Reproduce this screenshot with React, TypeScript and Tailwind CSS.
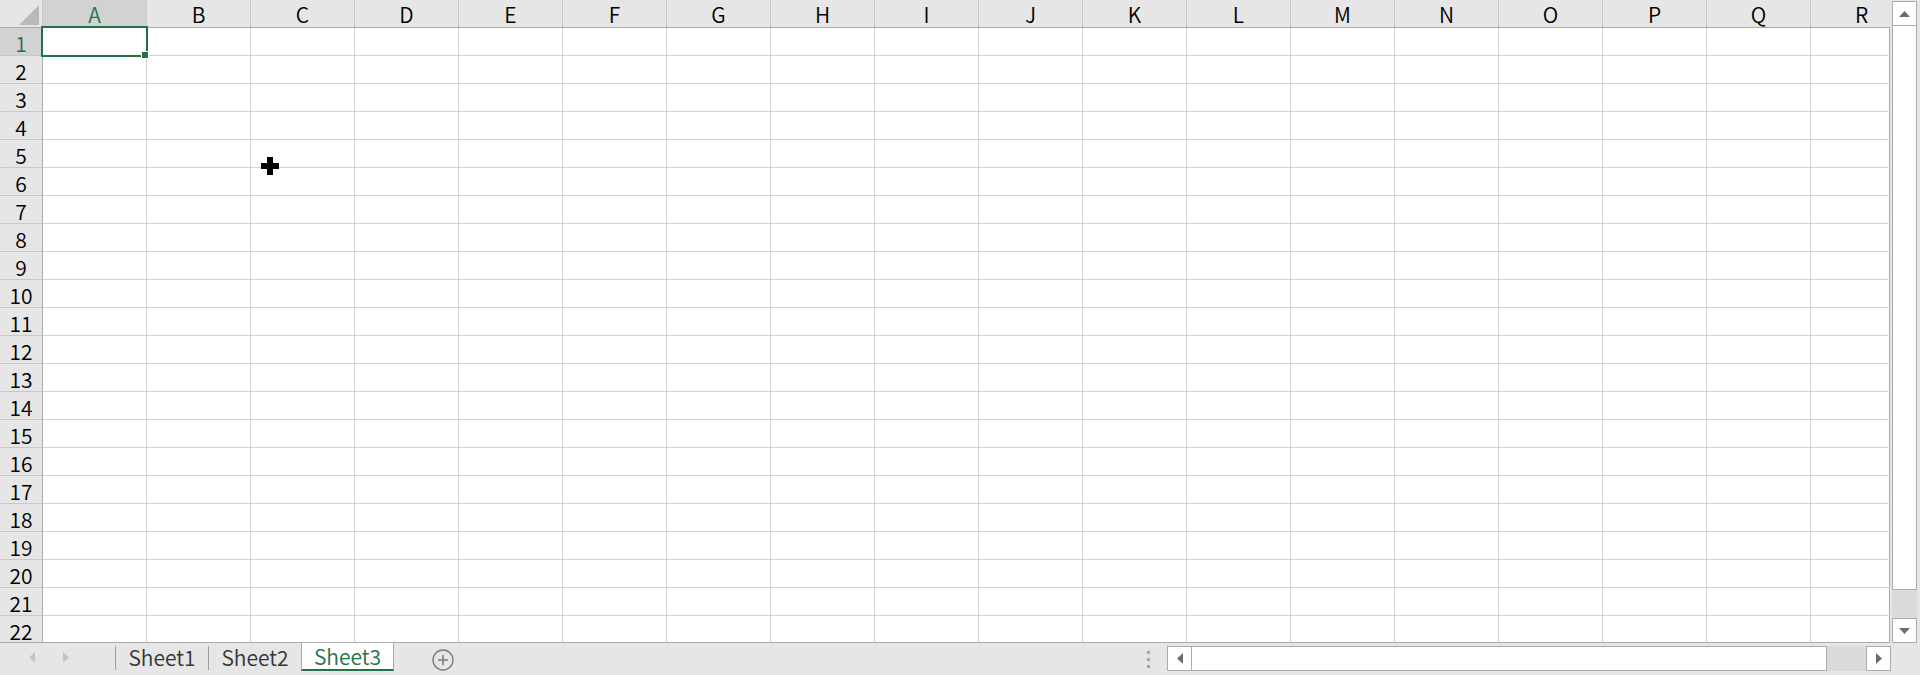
import React from "react";

const COLS = "ABCDEFGHIJKLMNOPQ".split("");
const ROWS = Array.from({ length: 22 }, (_, i) => i + 1);

function Tri({ dir, color, w, h }: { dir: "up" | "down" | "left" | "right"; color: string; w: number; h: number }) {
  const pts =
    dir === "up"
      ? `0,${h} ${w / 2},0 ${w},${h}`
      : dir === "down"
      ? `0,0 ${w},0 ${w / 2},${h}`
      : dir === "left"
      ? `${w},0 0,${h / 2} ${w},${h}`
      : `0,0 ${w},${h / 2} 0,${h}`;
  return (
    <svg width={w} height={h} viewBox={`0 0 ${w} ${h}`} className="block">
      <polygon points={pts} fill={color} />
    </svg>
  );
}

function HeaderRow() {
  return (
    <div className="flex h-[28px] shrink-0 border-b border-[#ababab] bg-[#e6e6e6]">
      {/* corner */}
      <div className="w-[43px] border-r border-[#c8c8c8] flex items-end justify-end pr-[3px] pb-[2px]">
        <svg width="20" height="20" viewBox="0 0 20 20" className="block">
          <polygon points="0,20 20,20 20,0" fill="#b9b9b9" />
        </svg>
      </div>
      {COLS.map((c) => (
        <div
          key={c}
          className={`w-[104px] border-r border-[#c8c8c8] flex items-center justify-center ${
            c === "A" ? "bg-[#d2d2d2] text-[#217346]" : "text-black"
          }`}
        >
          <span className="leading-[22px]">{c}</span>
        </div>
      ))}
      <div className="w-[79px] flex items-center justify-center text-black pl-[22px]">
        <span className="leading-[22px]">R</span>
      </div>
    </div>
  );
}

function Row({ n }: { n: number }) {
  const sel = n === 1;
  return (
    <div className="flex h-[28px] shrink-0">
      <div
        className={`w-[43px] border-r border-b border-r-[#ababab] border-b-[#c8c8c8] flex items-center justify-center pt-[2px] ${
          sel ? "bg-[#d2d2d2] text-[#217346]" : "bg-[#e6e6e6] text-black"
        }`}
      >
        <span className="leading-[22px]">{n}</span>
      </div>
      {COLS.map((c) => (
        <div key={c} className="w-[104px] border-r border-b border-[#d4d4d4] bg-white" />
      ))}
      <div className="w-[79px] border-b border-b-[#d4d4d4] border-r border-r-[#ababab] bg-white" />
    </div>
  );
}

function VScroll() {
  return (
    <div className="w-[25px] flex flex-col pt-[1px] overflow-hidden">
      <div className="h-[25px] shrink-0 border border-[#ababab] bg-white flex items-center justify-center">
        <Tri dir="up" color="#6d6d6d" w={11} h={6} />
      </div>
      <div className="h-[564px] shrink-0 border-x border-b border-[#ababab] bg-white" />
      <div className="h-[28px] shrink-0 bg-[#dadada]" />
      <div className="h-[25px] shrink-0 border border-[#ababab] bg-white flex items-center justify-center">
        <Tri dir="down" color="#6d6d6d" w={11} h={6} />
      </div>
    </div>
  );
}

function HScroll() {
  return (
    <div className="flex h-[25px] mt-[3px]">
      <div className="w-[25px] border border-[#ababab] bg-white flex items-center justify-center">
        <Tri dir="left" color="#6d6d6d" w={6} h={11} />
      </div>
      <div className="w-[635px] border-y border-r border-[#ababab] bg-white" />
      <div className="w-[39px] bg-[#dadada]" />
      <div className="w-[25px] border border-[#ababab] bg-white flex items-center justify-center">
        <Tri dir="right" color="#6d6d6d" w={6} h={11} />
      </div>
    </div>
  );
}

function TabBar() {
  return (
    <div className="h-[32px] flex items-start">
      <div className="w-[115px] h-[28px] flex items-center pl-[29px] gap-[28px]">
        <Tri dir="left" color="#c4c4c4" w={6} h={11} />
        <Tri dir="right" color="#c4c4c4" w={6} h={11} />
      </div>
      <div className="w-px h-[24px] mt-[3px] bg-[#9e9e9e]" />
      <div className="w-[92px] h-[28px] flex items-center justify-center text-[#333]">
        <span className="leading-[22px]">Sheet1</span>
      </div>
      <div className="w-px h-[24px] mt-[3px] bg-[#9e9e9e]" />
      <div className="w-[92px] h-[28px] flex items-center justify-center text-[#333]">
        <span className="leading-[22px]">Sheet2</span>
      </div>
      <div className="w-[93px] h-[28px] border-x border-[#ababab] border-b-2 border-b-[#217346] bg-white flex items-center justify-center text-[#217346]">
        <span className="leading-[22px]">Sheet3</span>
      </div>
      <div className="ml-[38px] mt-[6px]">
        <svg width="22" height="22" viewBox="0 0 22 22" className="block">
          <circle cx="11" cy="11" r="10" fill="none" stroke="#7b7b7b" strokeWidth="1.4" />
          <path d="M11 6v10M6 11h10" stroke="#7b7b7b" strokeWidth="1.6" />
        </svg>
      </div>
      <div className="flex-1" />
      <div className="flex flex-col gap-[4px] mt-[8px] mr-[17px]">
        <div className="w-[3px] h-[3px] bg-[#a6a6a6]" />
        <div className="w-[3px] h-[3px] bg-[#a6a6a6]" />
        <div className="w-[3px] h-[3px] bg-[#a6a6a6]" />
      </div>
      <HScroll />
      <div className="w-[29px]" />
    </div>
  );
}

export default function App() {
  return (
    <div
      className="w-[1920px] h-[675px] bg-[#e6e6e6] overflow-hidden flex flex-col text-[21px] font-[350]"
      style={{ fontFamily: '"Noto Sans CJK SC", "Noto Sans", sans-serif' }}
    >
      <div className="flex h-[643px] shrink-0">
        <div className="w-[1890px] h-[643px] relative flex flex-col">
          <HeaderRow />
          <div className="h-[614px] overflow-hidden flex flex-col">
            {ROWS.map((n) => (
              <Row key={n} n={n} />
            ))}
          </div>
          <div className="h-px bg-[#ababab]" />
          {/* active cell A1 */}
          <div className="absolute left-[41px] top-[26px] w-[107px] h-[31px] border-2 border-[#217346]" />
          <div className="absolute left-[141px] top-[51px] w-[8px] h-[8px] bg-[#217346] border border-white" />
          {/* mouse cursor */}
          <svg className="absolute left-[261px] top-[157px]" width="18" height="18" viewBox="0 0 18 18">
            <path d="M6 0h6v6h6v6h-6v6H6v-6H0V6h6z" fill="#000" />
          </svg>
        </div>
        <div className="w-[2px]" />
        <VScroll />
        <div className="w-[3px]" />
      </div>
      <TabBar />
    </div>
  );
}
